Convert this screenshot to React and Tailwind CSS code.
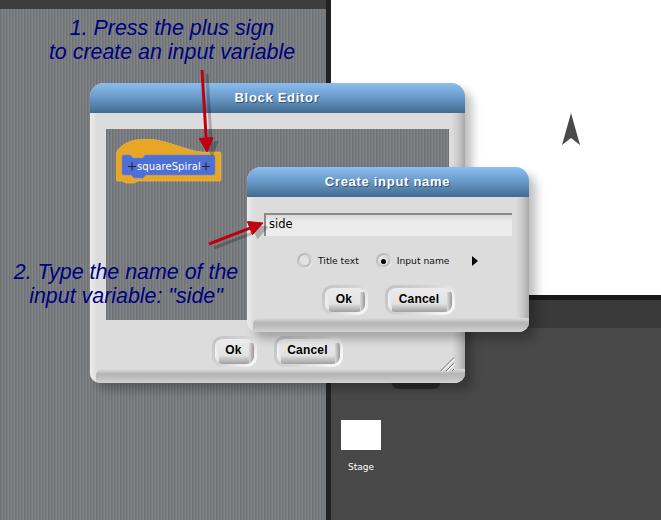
const stripes = "bg-[repeating-linear-gradient(90deg,#6e7275_0,#6e7275_1px,#787c7f_1px,#787c7f_2px,#818588_2px,#818588_3px)]";

function Btn({ w, h, children }) {
  return (
    <div className={`${w} ${h} rounded-[10px] p-[3px] bg-[linear-gradient(135deg,#c0c0c0,#d6d6d6_50%,#ffffff)]`}>
      <div className="relative w-full h-full rounded-[8px] bg-[linear-gradient(180deg,#ececec,#e2e2e2_65%,#a0a0a0)] flex items-center justify-center overflow-hidden">
        <div className="absolute right-0 top-1 bottom-0 w-[5px] bg-[linear-gradient(90deg,#dcdcdc,#969696)]" />
        <div className="absolute left-0 top-0 bottom-0 w-[4px] bg-[linear-gradient(90deg,#f2f2f2,#e4e4e4)]" />
        <span className="relative -mt-[3px] -ml-[2px] font-['Liberation_Sans',sans-serif] text-[12px] font-bold text-black tracking-[0.2px]">{children}</span>
      </div>
    </div>
  );
}

function Title({ children }) {
  return (
    <div className="h-[30px] rounded-t-[14px] bg-[linear-gradient(180deg,#8bbdf0,#6b9ccb_45%,#426b8f)] flex items-center justify-center">
      <span className="-ml-[1px] font-['Liberation_Sans',sans-serif] text-[13px] font-bold tracking-[0.7px] text-white [text-shadow:1px_1px_0_#35536e]">{children}</span>
    </div>
  );
}

function Frame({ className, title, children }) {
  return (
    <div className={`absolute rounded-t-[14px] rounded-b-[10px] bg-[#dcdcdc] shadow-[7px_7px_10px_rgba(0,0,0,0.25)] ${className}`}>
      <Title>{title}</Title>
      <div className="relative flex-1 overflow-hidden rounded-b-[10px]">
        <div className="absolute left-0 top-0 bottom-0 w-[7px] bg-[linear-gradient(90deg,#ececec,#dcdcdc)]" />
        <div className="absolute right-0 top-0 bottom-0 w-[13px] bg-[linear-gradient(90deg,#dcdcdc,#c8c8c8_50%,#a8a8a8)]" />
        <div className="absolute left-[6px] right-0 bottom-0 h-[14px] rounded-tl-[6px] bg-[linear-gradient(180deg,#dcdcdc,#b4b4b4_35%,#c0c0c0_65%,#d2d2d2)]" />
        {children}
      </div>
    </div>
  );
}

function Grip() {
  return (
    <svg className="absolute right-[10px] bottom-[11px]" width="15" height="15" viewBox="0 0 15 15" fill="none">
      <path d="M0.5 14 L14 0.5" stroke="#777" strokeWidth="1" />
      <path d="M1.5 15 L15 1.5" stroke="#fff" strokeWidth="1" />
      <path d="M6 14 L14 6" stroke="#777" strokeWidth="1" />
      <path d="M7 15 L15 7" stroke="#fff" strokeWidth="1" />
      <path d="M12 14 L14 12" stroke="#777" strokeWidth="1" />
    </svg>
  );
}

function Radio({ on, label }) {
  return (
    <div className="flex items-center gap-[5px]">
      <div className="w-[16px] h-[16px] rounded-full bg-[linear-gradient(135deg,#a8a8a8,#f4f4f4)] p-[2px] flex">
        <div className="flex-1 rounded-full bg-[linear-gradient(135deg,#f4f4f4,#a8a8a8)] p-[2px] flex">
          <div className="flex-1 rounded-full bg-[#e2e2e2] flex items-center justify-center">
            {on && <div className="w-[5px] h-[5px] rounded-full bg-black" />}
          </div>
        </div>
      </div>
      <span className="font-['DejaVu_Sans',sans-serif] text-[9.2px] text-[#111]">{label}</span>
    </div>
  );
}

function Block() {
  return (
    <div className="absolute left-[10px] top-[10px] w-[106px] h-[46px]">
      <svg width="106" height="46" viewBox="0 0 106 46">
        <path d="M0 14 C4 6 14 0 30 0 C50 0 70 12 86 13 L104 13 Q105 13 105 15 L105 41 Q105 42 104 42 L22 42 L18 44 L10 44 L6 42 L2 42 Q0 42 0 40 Z" fill="#e7a623" stroke="#f0bf55" strokeWidth="0.6" />
        <path d="M8 16 L14 16 L17 19 L27 19 L29 16 L97 16 Q99 16 99 18 L99 34 Q99 36 97 36 L30 36 L27 39 L18 39 L15 36 L8 36 Q6 36 6 34 L6 18 Q6 16 8 16 Z" fill="#4e6fd4" stroke="#6e8ae0" strokeWidth="0.6" />
        <path d="M12 27.5 H20 M16 23.5 V31.5 M86 27.5 H94 M90 23.5 V31.5" stroke="#222" strokeWidth="1" />
      </svg>
      <span className="absolute left-[21px] top-[21px] font-['DejaVu_Sans',sans-serif] text-[10px] leading-[14px] text-white tracking-[0.1px]">squareSpiral</span>
    </div>
  );
}

function Arrow({ x1, y1, x2, y2, width, height }) {
  const dx = x2 - x1, dy = y2 - y1, l = Math.hypot(dx, dy), ux = dx / l, uy = dy / l;
  const bx = x2 - ux * 14, by = y2 - uy * 14;
  const head = `${x2},${y2} ${bx - uy * 7},${by + ux * 7} ${bx + uy * 7},${by - ux * 7}`;
  const arrow = (
    <>
      <line x1={x1} y1={y1} x2={bx} y2={by} strokeWidth="3" />
      <polygon points={head} />
    </>
  );
  return (
    <svg className="absolute left-0 top-0" width={width} height={height}>
      <g fill="#000" stroke="#000" opacity="0.22" transform="translate(5 4)">{arrow}</g>
      <g fill="#c00010" stroke="#c00010" strokeWidth="1">{arrow}</g>
    </svg>
  );
}

export default function App() {
  return (
    <div className="relative w-[661px] h-[520px] overflow-hidden flex bg-[#484848]">
      <div className="w-[326px] flex flex-col">
        <div className="h-[9px] bg-[#3d3d3d]" />
        <div className={`flex-1 ${stripes}`} />
      </div>
      <div className="w-[5px] bg-[#222222]" />
      <div className="flex-1 flex flex-col">
        <div className="h-[295px] bg-white flex items-start justify-end">
          <svg className="mt-[113px] mr-[80px]" width="20" height="34" viewBox="0 0 20 34">
            <path d="M10 0 L19 32 L10 25 L1 32 Z" fill="#4a4a4a" />
          </svg>
        </div>
        <div className="h-[5px] bg-[#191919]" />
        <div className="h-[28px] bg-[#393939]" />
        <div className="flex-1 flex flex-col items-start pl-[10px] pt-[92px]">
          <div className="w-[40px] h-[30px] bg-white" />
          <div className="w-[40px] mt-[11px] text-center font-['DejaVu_Sans',sans-serif] text-[9px] leading-[12px] text-white">Stage</div>
        </div>
      </div>

      <div className="absolute left-[391px] top-[376px] w-[50px] h-[13px] rounded-b-[8px] bg-[#2c2c2c]" />

      <Frame className="left-[90px] top-[83px] w-[375px] h-[300px] flex flex-col" title="Block Editor">
        <div className={`absolute left-[16px] top-[16px] w-[343px] h-[191px] ${stripes}`}>
          <Block />
        </div>
        <div className="absolute left-[122px] top-[223px] flex gap-[17px]">
          <Btn w="w-[45px]" h="h-[31px]">Ok</Btn>
          <Btn w="w-[69px]" h="h-[31px]">Cancel</Btn>
        </div>
        <Grip />
      </Frame>

      <Frame className="left-[247px] top-[167px] w-[282px] h-[165px] flex flex-col" title="Create input name">
        <div className="absolute left-[17px] top-[16px] w-[248px] h-[23px] flex items-center pl-[3px] bg-[linear-gradient(180deg,#dadada,#ececec_35%)] border-l-2 border-t-2 border-[#8a8a8a]">
          <span className="font-['DejaVu_Sans',sans-serif] text-[11.5px] text-black -mt-[1px]">side</span>
        </div>
        <div className="absolute left-[50px] top-[56px] flex items-center">
          <Radio label="Title text" />
          <div className="w-[17px]" />
          <Radio on label="Input name" />
          <svg className="ml-[22px]" width="6" height="10" viewBox="0 0 6 10"><path d="M0 0 L6 5 L0 10 Z" fill="#000" /></svg>
        </div>
        <div className="absolute left-[75px] top-[88px] flex gap-[17px]">
          <Btn w="w-[46px]" h="h-[30px]">Ok</Btn>
          <Btn w="w-[70px]" h="h-[30px]">Cancel</Btn>
        </div>
      </Frame>

      <Arrow x1={202} y1={70} x2={207} y2={152} width={240} height={170} />
      <Arrow x1={209} y1={244} x2={263} y2={223} width={280} height={260} />

      <div className="absolute left-[12px] top-[16px] w-[320px] text-center font-['Liberation_Sans',sans-serif] italic text-[21.4px] leading-[24px] text-[#000080]">
        <div>1. Press the plus sign</div>
        <div>to create an input variable</div>
      </div>
      <div className="absolute left-0 top-[260px] w-[252px] text-center font-['Liberation_Sans',sans-serif] italic text-[21.4px] leading-[24px] text-[#000080]">
        <div>2. Type the name of the</div>
        <div>input variable: "side"</div>
      </div>
    </div>
  );
}
